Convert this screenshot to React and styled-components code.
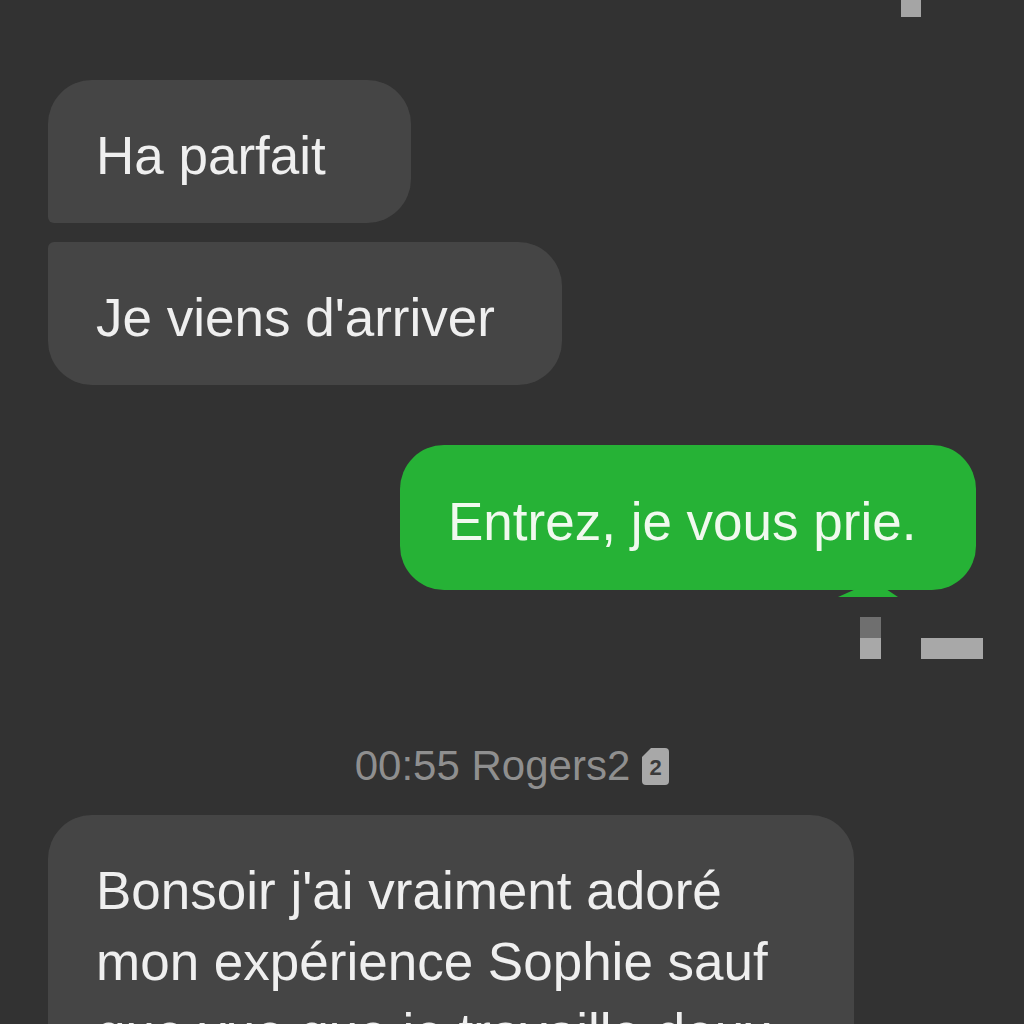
import React from "react";
import styled, { createGlobalStyle } from "styled-components";

const GlobalStyle = createGlobalStyle`
  html, body {
    margin: 0;
    height: 100%;
    background: #323232;
    overflow: hidden;
  }
`

const corners = {
  top: "44px 44px 44px 6px",
  bottom: "6px 44px 44px 44px",
  all: "44px",
}

const Thread = styled.div`
  height: 1024px;
  overflow: hidden;
  box-sizing: border-box;
  padding: 0 48px;
  display: flex;
  flex-direction: column;
  font-family: "Liberation Sans", Arial, sans-serif;
  background: #323232;
`

const TopMark = styled.div`
  flex-shrink: 0;
  align-self: flex-end;
  width: 20px;
  height: 17px;
  margin-right: 55px;
  margin-bottom: 63px;
  background: #a5a5a5;
`

const Bubble = styled.div`
  box-sizing: border-box;
  flex-shrink: 0;
  padding: ${(p) => (p.$out ? "41px 48px 33px" : "40px 48px 32px")};
  font-size: 53px;
  line-height: 71px;
  font-weight: 400;
  color: ${(p) => (p.$out ? "#f0f9ee" : "#efefef")};
  background: ${(p) => (p.$out ? "#26b236" : "#454545")};
  border-radius: ${(p) => corners[p.$corner || "all"]};
  align-self: ${(p) => (p.$out ? "flex-end" : "flex-start")};
  width: ${(p) => p.$width}px;
  position: relative;
`

const Tail = styled.span`
  position: absolute;
  right: 78px;
  bottom: -7px;
  width: 60px;
  height: 8px;
  background: #26b236;
  clip-path: polygon(0 100%, 30% 0, 80% 0, 100% 100%);
`

const Gap = styled.div`
  flex-shrink: 0;
  height: ${(p) => p.$size}px;
`

const MetaRow = styled.div`
  flex-shrink: 0;
  align-self: flex-end;
  display: flex;
  align-items: flex-end;
  gap: 40px;
  margin-right: -7px;
  margin-top: 27px;
`

const StackMark = styled.div`
  display: flex;
  flex-direction: column;
  width: 21px;
`

const MarkCell = styled.div`
  height: 21px;
  background: ${(p) => p.$tone};
`

const BarMark = styled.div`
  width: 62px;
  height: 21px;
  background: #a8a8a8;
`

const Stamp = styled.div`
  flex-shrink: 0;
  display: flex;
  align-items: center;
  justify-content: center;
  gap: 12px;
  margin-top: 84px;
  margin-bottom: 26px;
  height: 46px;
  font-size: 42px;
  line-height: 46px;
  color: #8f8f8f;
`

const SimIcon = () => (
  <svg width="27" height="37" viewBox="0 0 27 37">
    <path d="M9 0h14a4 4 0 0 1 4 4v29a4 4 0 0 1-4 4H4a4 4 0 0 1-4-4V9z" fill="#a8a8a8" />
    <text x="13.5" y="27" textAnchor="middle" fontSize="22" fontWeight="700" fontFamily="Liberation Sans, sans-serif" fill="#3a3a3a">2</text>
  </svg>
)

export default function App() {
  return (
    <Thread>
      <GlobalStyle />
      <TopMark />
      <Bubble $width={363} $corner="top">Ha parfait</Bubble>
      <Gap $size={19} />
      <Bubble $width={514} $corner="bottom">Je viens d'arriver</Bubble>
      <Gap $size={60} />
      <Bubble $width={576} $out>
        Entrez, je vous prie.
        <Tail />
      </Bubble>
      <MetaRow>
        <StackMark>
          <MarkCell $tone="#6f6f6f" />
          <MarkCell $tone="#a8a8a8" />
        </StackMark>
        <BarMark />
      </MetaRow>
      <Stamp>
        00:55 Rogers2
        <SimIcon />
      </Stamp>
      <Bubble $width={806}>
        Bonsoir j'ai vraiment adoré mon expérience Sophie sauf que vue que je travaille deux
      </Bubble>
    </Thread>
  )
}
